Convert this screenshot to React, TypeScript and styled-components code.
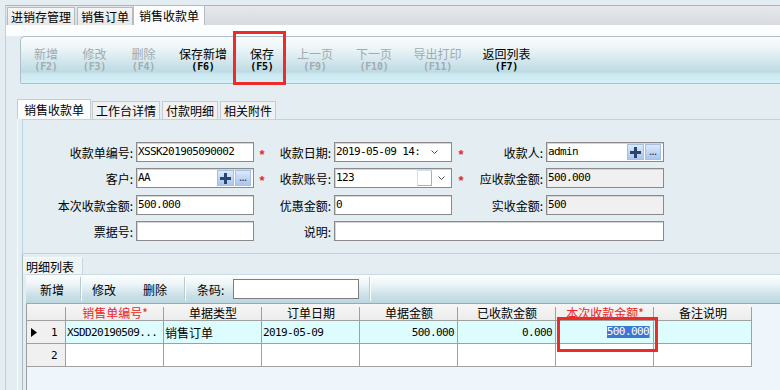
import React from 'react';
import styled, { createGlobalStyle } from 'styled-components';

const CJK = `"Noto Sans CJK SC", "Noto Sans", sans-serif`;
const MONO = `"DejaVu Sans Mono", "Liberation Mono", monospace`;

const GlobalStyle = createGlobalStyle`
  html, body { margin: 0; padding: 0; background: #e3edf2; }
  body { font-family: ${CJK}; font-size: 12px; color: #000; }
  * { box-sizing: border-box; }
`;

const Page = styled.div`
  width: 780px;
  height: 390px;
  overflow: hidden;
  display: flex;
  flex-direction: column;
  background: #e3edf2;
`;

/* ---- top document tabs ---- */
const TopStrip = styled.div`
  display: flex;
  align-items: flex-end;
  height: 20px;
  margin: 5px 0 0 5px;
  padding-left: 1px;
  border-top: 1px solid #a9b4ba;
  border-left: 1px solid #c3cfd5;
  background: linear-gradient(#e6e8eb, #d8dbdf);
`;

const TopTab = styled.div<{ $active?: boolean; $gap?: number }>`
  display: flex;
  align-items: center;
  height: ${p => (p.$active ? 20 : 18)}px;
  padding: 0 ${p => (p.$active ? 5 : 3)}px;
  margin-right: ${p => p.$gap ?? 0}px;
  border: 1px solid #b5bcc1;
  border-bottom: none;
  background: ${p => (p.$active ? '#fbfdfe' : 'linear-gradient(#f5f5f5, #e7e7e7)')};
  font-size: 12px;
  line-height: 14px;
  white-space: nowrap;
`;

const Workspace = styled.div`
  flex: 1;
  display: flex;
  flex-direction: column;
  margin-left: 5px;
  border-left: 1px solid #c3cfd5;
`;

const WhiteBand = styled.div`
  height: 11px;
  background: #fbfdfe;
`;

/* ---- main toolbar ---- */
const MainToolbar = styled.div`
  display: flex;
  height: 48px;
  margin-left: 14px;
  border: 1px solid #aebfc6;
  border-right: none;
  border-top-left-radius: 5px;
  border-bottom-left-radius: 2px;
  background: linear-gradient(
    #fafcfd 0%,
    #eef6f8 22%,
    #c9e2e9 62%,
    #bddae2 76%,
    #cbe8f0 80%,
    #d5f0f7 100%
  );
`;

const ToolBtn = styled.div<{ $w: number; $off?: boolean }>`
  position: relative;
  flex: none;
  width: ${p => p.$w}px;
  display: flex;
  flex-direction: column;
  align-items: center;
  justify-content: center;
  color: ${p => (p.$off ? '#a2abb0' : '#000')};
`;

const BtnLabel = styled.span`
  display: block;
  height: 14px;
  font: 12px/14px ${CJK};
  white-space: nowrap;
`;

const BtnKey = styled.span`
  display: block;
  height: 12px;
  font: bold 10px/12px ${MONO};
  letter-spacing: -0.2px;
`;

const SaveMark = styled.div`
  position: absolute;
  left: -4px;
  top: -6px;
  width: 53px;
  height: 54px;
  border: 3px solid #ee2b2b;
  pointer-events: none;
`;

/* ---- form tabs ---- */
const SubArea = styled.div`
  flex: 1;
  display: flex;
  flex-direction: column;
  margin: 15px 0 0 11px;
  box-shadow: inset 1px 0 0 #f6fafc;
`;

const SubTabs = styled.div`
  display: flex;
  align-items: flex-end;
  height: 20px;
`;

const SubTab = styled.div<{ $active?: boolean; $gap?: number }>`
  display: flex;
  align-items: center;
  height: ${p => (p.$active ? 20 : 18)}px;
  padding: 0 ${p => (p.$active ? 6 : 3)}px;
  margin-right: ${p => p.$gap ?? 2}px;
  border: 1px solid #c3ccd1;
  border-bottom: none;
  background: ${p => (p.$active ? '#fcfdfe' : '#eff1f2')};
  font-size: 12px;
  line-height: 14px;
  white-space: nowrap;
`;

const FormPanel = styled.div`
  height: 135px;
  margin-left: 5px;
  padding-top: 22px;
  border-top: 1px solid #b7d6e3;
  border-left: 1px solid #b7d6e3;
  border-bottom: 1px solid #b7d6e3;
`;

const FormGrid = styled.div`
  display: grid;
  grid-template-columns: 113px 118px 16px 64px 118px 18px 76px 118px;
  grid-template-rows: 26px 27px 26px 20px;
  align-items: start;
`;

const Label = styled.div`
  height: 20px;
  display: flex;
  align-items: center;
  justify-content: flex-end;
  padding-right: 3px;
  font-size: 12px;
  white-space: nowrap;
`;

const Star = styled.div`
  height: 20px;
  text-align: center;
  color: #e8262b;
  font: bold 13px/26px "Liberation Sans", sans-serif;
`;

const Field = styled.div<{ $off?: boolean; $span?: number }>`
  grid-column: span ${p => p.$span ?? 1};
  height: 20px;
  display: flex;
  align-items: center;
  padding: 0 2px 0 1px;
  border: 1px solid #8a8a8a;
  box-shadow: inset 1px 1px 0 #d4d4d4;
  background: ${p => (p.$off ? '#f0f0f0' : '#fff')};
`;

const Value = styled.span`
  margin-top: -2px;
  font: 11px ${MONO};
  letter-spacing: -0.6px;
  white-space: nowrap;
`;

const PickBtn = styled.span<{ $w: number }>`
  flex: none;
  width: ${p => p.$w}px;
  height: 16px;
  display: flex;
  align-items: center;
  justify-content: center;
  margin-left: 1px;
  border: 1px solid #a6bfe4;
  background: linear-gradient(#dbe8f9, #aac6ee);
  color: #1f3a60;
  font: bold 9px/16px "Liberation Sans", sans-serif;
`;

const PickRow = styled.span`
  display: flex;
  margin-left: auto;
`;

const ChevronBox = styled.span<{ $right: number; $auto?: boolean }>`
  display: flex;
  margin-left: ${p => (p.$auto ? 'auto' : '0')};
  margin-right: ${p => p.$right}px;
`;

const FocusBox = styled.span`
  width: 15px;
  height: 16px;
  margin-left: auto;
  margin-right: 6px;
  border: 1px solid #d0e0f6;
  border-right-color: #93b4e6;
  border-bottom-color: #93b4e6;
`;

/* ---- detail list ---- */
const DetailSection = styled.div`
  flex: 1;
  display: flex;
  flex-direction: column;
  margin-left: 5px;
  border-left: 1px solid #a9b9c0;
`;

const DetailTab = styled.div`
  width: 60px;
  height: 17px;
  margin-top: 3px;
  display: flex;
  align-items: center;
  padding-left: 3px;
  background: #eff4f7;
  border-top: 1px solid #f8fbfc;
  border-right: 1px solid #c8d6dc;
  font-size: 12px;
`;

const DetailBar = styled.div`
  display: flex;
  height: 30px;
  margin-left: 3px;
  border-top: 1px solid #c9dbe3;
  border-bottom: 1px solid #9fa9ad;
  background: linear-gradient(#fdfefe 0%, #eef6f8 30%, #c9dfe7 75%, #bcd6df 100%);
`;

const BarGroup = styled.div<{ $w?: number }>`
  display: flex;
  align-items: center;
  flex: ${p => (p.$w ? 'none' : '1')};
  width: ${p => (p.$w ? `${p.$w}px` : 'auto')};
`;

const BarText = styled.span<{ $left: number }>`
  margin-left: ${p => p.$left}px;
  font-size: 12px;
  white-space: nowrap;
`;

const Sep = styled.div`
  flex: none;
  width: 2px;
  margin: 2px 0;
  background: linear-gradient(to right, #b9ccd5 1px, #ffffff 1px);
`;

const BarInput = styled.div`
  width: 126px;
  height: 20px;
  margin-left: 9px;
  border: 1px solid #7d7d7d;
  background: #fff;
`;

const GridBox = styled.div`
  position: relative;
  flex: 1;
  margin-left: 3px;
  border-left: 1px solid #9c9c9c;
  background: #eef5fb;
`;

const GridTable = styled.div`
  display: grid;
  grid-template-columns: 39px repeat(7, 98px);
  width: 725px;
`;

const HeadCell = styled.div<{ $req?: boolean }>`
  position: relative;
  height: 17px;
  display: flex;
  align-items: center;
  justify-content: center;
  background: linear-gradient(#f6f6f6, #ececec);
  border-bottom: 1px solid #a0a0a0;
  color: ${p => (p.$req ? '#f02424' : '#000')};
  font-size: 12px;
  white-space: nowrap;
  &::after {
    content: '';
    position: absolute;
    right: 0;
    top: 3px;
    bottom: 0;
    width: 1px;
    background: #a0a0a0;
  }
`;

const Cell = styled.div<{ $bg?: string; $right?: boolean; $mono?: boolean }>`
  height: 23px;
  display: flex;
  align-items: center;
  justify-content: ${p => (p.$right ? 'flex-end' : 'flex-start')};
  padding: 0 ${p => (p.$right ? 3 : 1)}px 0 1px;
  border-right: 1px solid #a0a0a0;
  border-bottom: 1px solid #a0a0a0;
  background: ${p => p.$bg ?? '#fff'};
  font: ${p => (p.$mono ? `11px ${MONO}` : `12px ${CJK}`)};
  letter-spacing: ${p => (p.$mono ? '-0.6px' : '0')};
  white-space: nowrap;
  overflow: hidden;
`;

const RowHead = styled(Cell)`
  justify-content: space-between;
  padding: 0 8px 0 4px;
  background: #f0f0f0;
`;

const Selected = styled.span`
  background: #3a78d6;
  color: #fff;
  border-right: 1px solid #f39c12;
  line-height: 12px;
`;

const CellMark = styled.div`
  position: absolute;
  left: 530px;
  top: 13px;
  width: 101px;
  height: 35px;
  border: 3px solid #ee2b2b;
  pointer-events: none;
`;

const Chevron = () => (
  <svg width="7" height="4" viewBox="0 0 7 4">
    <polyline points="0.5,0.5 3.5,3.5 6.5,0.5" fill="none" stroke="#4a4a4a" strokeWidth="1" />
  </svg>
);

const PlusIcon = () => (
  <svg width="11" height="11" viewBox="0 0 11 11">
    <path d="M4 0h3v11H4zM0 4h11v3H0z" fill="#2a466e" />
  </svg>
);

const RowArrow = () => (
  <svg width="6" height="9" viewBox="0 0 6 9">
    <path d="M0 0L6 4.5L0 9z" fill="#000" />
  </svg>
);

const toolButtons = [
  { label: '新增', key: '(F2)', w: 50, off: true },
  { label: '修改', key: '(F3)', w: 47, off: true },
  { label: '删除', key: '(F4)', w: 51, off: true },
  { label: '保存新增', key: '(F6)', w: 68 },
  { label: '保存', key: '(F5)', w: 50, mark: true },
  { label: '上一页', key: '(F9)', w: 56, off: true },
  { label: '下一页', key: '(F10)', w: 62, off: true },
  { label: '导出打印', key: '(F11)', w: 65, off: true },
  { label: '返回列表', key: '(F7)', w: 73 },
];

const columns = [
  { title: '销售单编号*', req: true },
  { title: '单据类型' },
  { title: '订单日期' },
  { title: '单据金额' },
  { title: '已收款金额' },
  { title: '本次收款金额*', req: true },
  { title: '备注说明' },
];

const ROW_BG = '#dcfcfd';

export default function App() {
  return (
    <Page>
      <GlobalStyle />
      <TopStrip>
        <TopTab $gap={2}>进销存管理</TopTab>
        <TopTab>销售订单</TopTab>
        <TopTab $active>销售收款单</TopTab>
      </TopStrip>

      <Workspace>
        <WhiteBand />
        <MainToolbar>
          {toolButtons.map(b => (
            <ToolBtn key={b.label} $w={b.w} $off={b.off}>
              <BtnLabel>{b.label}</BtnLabel>
              <BtnKey>{b.key}</BtnKey>
              {b.mark && <SaveMark />}
            </ToolBtn>
          ))}
        </MainToolbar>

        <SubArea>
          <SubTabs>
            <SubTab $active $gap={1}>销售收款单</SubTab>
            <SubTab>工作台详情</SubTab>
            <SubTab>付款明细</SubTab>
            <SubTab>相关附件</SubTab>
          </SubTabs>

          <FormPanel>
            <FormGrid>
              <Label>收款单编号:</Label>
              <Field><Value>XSSK201905090002</Value></Field>
              <Star>*</Star>
              <Label>收款日期:</Label>
              <Field>
                <Value>2019-05-09 14:</Value>
                <ChevronBox $auto $right={11}><Chevron /></ChevronBox>
              </Field>
              <Star>*</Star>
              <Label>收款人:</Label>
              <Field>
                <Value>admin</Value>
                <PickRow>
                  <PickBtn $w={17}><PlusIcon /></PickBtn>
                  <PickBtn $w={16}>...</PickBtn>
                </PickRow>
              </Field>

              <Label>客户:</Label>
              <Field>
                <Value>AA</Value>
                <PickRow>
                  <PickBtn $w={17}><PlusIcon /></PickBtn>
                  <PickBtn $w={16}>...</PickBtn>
                </PickRow>
              </Field>
              <Star>*</Star>
              <Label>收款账号:</Label>
              <Field>
                <Value>123</Value>
                <FocusBox />
                <ChevronBox $right={4}><Chevron /></ChevronBox>
              </Field>
              <Star>*</Star>
              <Label>应收款金额:</Label>
              <Field $off><Value>500.000</Value></Field>

              <Label>本次收款金额:</Label>
              <Field><Value>500.000</Value></Field>
              <div />
              <Label>优惠金额:</Label>
              <Field><Value>0</Value></Field>
              <div />
              <Label>实收金额:</Label>
              <Field $off><Value>500</Value></Field>

              <Label>票据号:</Label>
              <Field />
              <div />
              <Label>说明:</Label>
              <Field $span={4} />
            </FormGrid>
          </FormPanel>

          <DetailSection>
            <DetailTab>明细列表</DetailTab>
            <DetailBar>
              <BarGroup $w={54}>
                <BarText $left={14}>新增</BarText>
              </BarGroup>
              <Sep />
              <BarGroup $w={102}>
                <BarText $left={10}>修改</BarText>
                <BarText $left={27}>删除</BarText>
              </BarGroup>
              <Sep />
              <BarGroup $w={183}>
                <BarText $left={11}>条码:</BarText>
                <BarInput />
              </BarGroup>
              <Sep />
              <BarGroup />
            </DetailBar>

            <GridBox>
              <GridTable>
                <HeadCell />
                {columns.map(c => (
                  <HeadCell key={c.title} $req={c.req}>{c.title}</HeadCell>
                ))}

                <RowHead $mono>
                  <RowArrow />
                  <span>1</span>
                </RowHead>
                <Cell $bg={ROW_BG} $mono>XSDD20190509...</Cell>
                <Cell $bg={ROW_BG}>销售订单</Cell>
                <Cell $bg={ROW_BG} $mono>2019-05-09</Cell>
                <Cell $bg={ROW_BG} $mono $right>500.000</Cell>
                <Cell $bg={ROW_BG} $mono $right>0.000</Cell>
                <Cell $bg={ROW_BG} $mono $right>
                  <Selected>500.000</Selected>
                </Cell>
                <Cell $bg={ROW_BG} />

                <RowHead $mono>
                  <span />
                  <span>2</span>
                </RowHead>
                {columns.map(c => (
                  <Cell key={c.title} />
                ))}
              </GridTable>
              <CellMark />
            </GridBox>
          </DetailSection>
        </SubArea>
      </Workspace>
    </Page>
  );
}
